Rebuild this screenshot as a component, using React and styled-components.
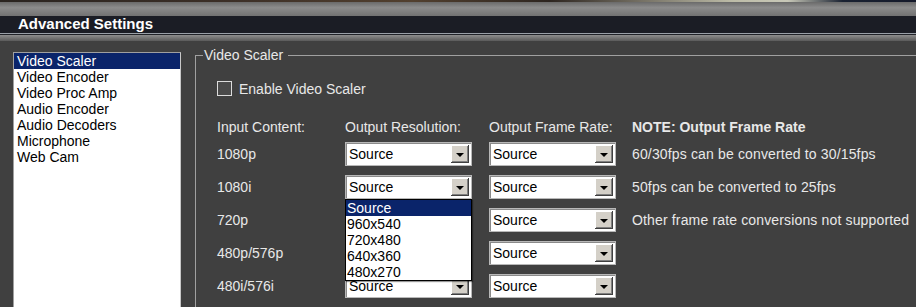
import React from 'react';
import styled, { createGlobalStyle } from 'styled-components';

const GlobalStyle = createGlobalStyle`
  html, body { margin: 0; padding: 0; background: #404040; }
  * { box-sizing: border-box; }
`;

const Screen = styled.div`
  width: 916px;
  height: 307px;
  overflow: hidden;
  background: #404040;
  font-family: "Liberation Sans", Arial, sans-serif;
  font-size: 14px;
  color: #e8e8e8;
`;

// thin slice of the video preview peeking above the dialog
const PhotoStrip = styled.div`
  height: 2px;
  background: linear-gradient(90deg, #2a2420 0%, #3c2f27 25%, #52402f 45%, #2d2520 60%, #bdbca8 80%, #c8c8b8 86%, #1a2232 92%, #14192a 100%);
`;

const Gloss = styled.div`
  height: ${p => p.h}px;
  background: ${p => p.bg};
`;

const TitleBar = styled.div`
  height: 18px;
  background: #1b1d25;
  border-bottom: 1px solid #9aa0a8;
  box-shadow: 0 1px 0 #202228;
  padding-left: 18px;
  font-weight: bold;
  font-size: 15px;
  line-height: 16px;
  color: #ffffff;
  margin-bottom: 1px;
`;

const Body = styled.div`
  display: flex;
  align-items: flex-start;
  padding-left: 13px;
`;

const CategoryList = styled.ul`
  list-style: none;
  margin: 11px 0 0 0;
  padding: 0;
  width: 168px;
  height: 300px;
  flex-shrink: 0;
  background: #ffffff;
  border: 1px solid #a0a0a0;
  border-right-color: #c8c8c8;
`;

const CategoryItem = styled.li`
  height: 16px;
  line-height: 16px;
  padding-left: 3px;
  color: ${p => (p.$active ? '#ffffff' : '#000000')};
  background: ${p => (p.$active ? '#0a246a' : 'transparent')};
`;

const Group = styled.fieldset`
  margin: 6px 0 0 14px;
  padding: 0;
  width: 760px;
  height: 320px;
  flex-shrink: 0;
  border: 1px solid #a0a0a0;
`;

const GroupTitle = styled.legend`
  margin-left: 7px;
  padding: 0 5px 0 1px;
  line-height: 16px;
  color: #e8e8e8;
`;

const GroupContent = styled.div`
  padding-left: 21px;
`;

const CheckRow = styled.label`
  display: flex;
  align-items: center;
  gap: 7px;
  margin-top: 18px;
  height: 16px;
`;

const CheckBox = styled.span`
  width: 15px;
  height: 15px;
  border: 1px solid #dcdcdc;
  background: #4a4a4a;
  margin-top: -1px;
`;

const Columns = styled.div`
  display: grid;
  grid-template-columns: 128px 144px 143px auto;
  align-items: center;
  white-space: nowrap;
`;

const HeaderRow = styled(Columns)`
  margin-top: 22px;
  margin-bottom: 7px;
  line-height: 16px;
`;

const Note = styled.span`
  font-weight: bold;
`;

const NoteText = styled.span`
  letter-spacing: 0.15px;
`;

const Rows = styled.div`
  display: flex;
  flex-direction: column;
  gap: 9px;
`;

const Cell = styled.div`
  position: relative;
  z-index: ${p => (p.$open ? 5 : 1)};
`;

const SelectBox = styled.div`
  display: flex;
  align-items: center;
  width: 127px;
  height: 24px;
  padding: 0 2px 0 3px;
  background: #ffffff;
  color: #000000;
  border: 1px solid #b8b8b8;
  box-shadow: inset 1px 1px 0 #8a8a8a;
`;

const ArrowButton = styled.span`
  display: flex;
  align-items: center;
  justify-content: center;
  width: 18px;
  height: 18px;
  margin-left: auto;
  background: #d4d0c8;
  box-shadow: inset -1px -1px 0 #404040, inset 1px 1px 0 #ffffff, inset -2px -2px 0 #808080;
  &::after {
    content: '';
    width: 0;
    height: 0;
    border-left: 4px solid transparent;
    border-right: 4px solid transparent;
    border-top: 4px solid #000000;
    margin-top: 1px;
  }
`;

const DropList = styled.ul`
  position: absolute;
  top: 100%;
  left: 0;
  width: 127px;
  margin: 0;
  padding: 0;
  list-style: none;
  background: #ffffff;
  border: 1px solid #000000;
  box-shadow: 1px 1px 1px rgba(0, 0, 0, 0.4);
`;

const DropItem = styled.li`
  height: 16px;
  line-height: 16px;
  padding-left: 1px;
  color: ${p => (p.$active ? '#ffffff' : '#000000')};
  background: ${p => (p.$active ? '#0a246a' : 'transparent')};
`;

const categories = [
  'Video Scaler',
  'Video Encoder',
  'Video Proc Amp',
  'Audio Encoder',
  'Audio Decoders',
  'Microphone',
  'Web Cam',
];

const rows = [
  { input: '1080p', note: '60/30fps can be converted to 30/15fps' },
  { input: '1080i', note: '50fps can be converted to 25fps', open: true },
  { input: '720p', note: 'Other frame rate conversions not supported' },
  { input: '480p/576p' },
  { input: '480i/576i' },
];

const resolutions = ['Source', '960x540', '720x480', '640x360', '480x270'];

function Select({ value, open, options }) {
  return (
    <Cell $open={open}>
      <SelectBox>
        {value}
        <ArrowButton />
      </SelectBox>
      {open && (
        <DropList>
          {options.map((o, i) => (
            <DropItem key={o} $active={i === 0}>{o}</DropItem>
          ))}
        </DropList>
      )}
    </Cell>
  );
}

export default function App() {
  return (
    <Screen>
      <GlobalStyle />
      <PhotoStrip />
      <Gloss h={14} bg="linear-gradient(#6a6a6a, #8c8c8c 40%, #727272)" />
      <TitleBar>Advanced Settings</TitleBar>
      <Gloss h={6} bg="linear-gradient(#8e8e8e, #5a5a5a)" />
      <Body>
        <CategoryList>
          {categories.map((c, i) => (
            <CategoryItem key={c} $active={i === 0}>{c}</CategoryItem>
          ))}
        </CategoryList>
        <Group>
          <GroupTitle>Video Scaler</GroupTitle>
          <GroupContent>
            <CheckRow>
              <CheckBox />
              Enable Video Scaler
            </CheckRow>
            <HeaderRow>
              <span>Input Content:</span>
              <span>Output Resolution:</span>
              <span>Output Frame Rate:</span>
              <Note>NOTE: Output Frame Rate</Note>
            </HeaderRow>
            <Rows>
              {rows.map(r => (
                <Columns key={r.input}>
                  <span>{r.input}</span>
                  <Select value="Source" open={r.open} options={resolutions} />
                  <Select value="Source" />
                  <NoteText>{r.note}</NoteText>
                </Columns>
              ))}
            </Rows>
          </GroupContent>
        </Group>
      </Body>
    </Screen>
  );
}
